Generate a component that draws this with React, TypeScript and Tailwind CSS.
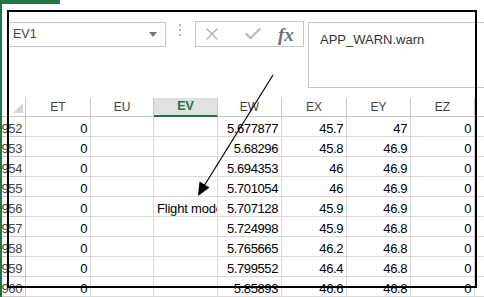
import { X, Check } from "lucide-react";

const font = { fontFamily: '"Liberation Sans", Arial, sans-serif' };

type Row = { n: number; et: string; ev?: string; ew: string; ex: string; ey: string; ez: string };

const rows: Row[] = [
  { n: 952, et: "0", ew: "5.677877", ex: "45.7", ey: "47", ez: "0" },
  { n: 953, et: "0", ew: "5.68296", ex: "45.8", ey: "46.9", ez: "0" },
  { n: 954, et: "0", ew: "5.694353", ex: "46", ey: "46.9", ez: "0" },
  { n: 955, et: "0", ew: "5.701054", ex: "46", ey: "46.9", ez: "0" },
  { n: 956, et: "0", ev: "Flight mode", ew: "5.707128", ex: "45.9", ey: "46.9", ez: "0" },
  { n: 957, et: "0", ew: "5.724998", ex: "45.9", ey: "46.8", ez: "0" },
  { n: 958, et: "0", ew: "5.765665", ex: "46.2", ey: "46.8", ez: "0" },
  { n: 959, et: "0", ew: "5.799552", ex: "46.4", ey: "46.8", ez: "0" },
  { n: 960, et: "0", ew: "5.85893", ex: "46.6", ey: "46.8", ez: "0" },
];

const cols = [
  { name: "ET", w: "w-[65px]" },
  { name: "EU", w: "w-[63px]" },
  { name: "EV", w: "w-[64px]" },
  { name: "EW", w: "w-[64px]" },
  { name: "EX", w: "w-[65px]" },
  { name: "EY", w: "w-[64px]" },
  { name: "EZ", w: "w-[64px]" },
];

const NumCell = ({ w, v }: { w: string; v: string }) => (
  <div
    className={`${w} h-[20px] shrink-0 border-r border-b border-[#d9d9d9] text-right pr-[3px] pt-[4px] leading-[15px] text-[13px] tracking-[-0.4px] text-black overflow-hidden whitespace-nowrap`}
  >
    {v}
  </div>
);

export default function App() {
  return (
    <div className="relative w-[484px] h-[297px] overflow-hidden bg-white" style={font}>
      {/* formula bar */}
      <div className="h-[98px] flex items-start pl-[7px] pt-[21px]">
        <div className="mt-[1px] w-[159px] h-[25px] border border-[#c6c6c6] flex items-center justify-between pl-[5px] pr-[8px]">
          <span className="text-[12.5px] text-[#444]">EV1</span>
          <svg width="8" height="5" viewBox="0 0 8 5">
            <path d="M0 0h8L4 5z" fill="#777" />
          </svg>
        </div>
        <div className="ml-[13px] mt-[3px] flex flex-col gap-[3px]">
          <div className="w-[2px] h-[2px] bg-[#b5b5b5]" />
          <div className="w-[2px] h-[2px] bg-[#b5b5b5]" />
          <div className="w-[2px] h-[2px] bg-[#b5b5b5]" />
        </div>
        <div className="ml-[14px] w-[109px] h-[26px] border border-[#c6c6c6] flex items-center pl-[6px]">
          <X size={20} strokeWidth={1.6} className="text-[#b3b3b3]" />
          <Check size={20} strokeWidth={2.6} className="ml-[21px] text-[#b8b8b8]" />
          <span
            className="ml-[15px] text-[19px] italic font-bold text-[#707070] leading-none"
            style={{ fontFamily: '"Liberation Serif", "Times New Roman", serif' }}
          >
            fx
          </span>
        </div>
        <div className="ml-[4px] mt-[1px] flex-1 h-[66px] border border-[#c6c6c6] border-r-0 pl-[11px] pt-[4px]">
          <span className="text-[13px] text-[#333]">APP_WARN.warn</span>
        </div>
      </div>

      {/* header row */}
      <div className="flex h-[19px]">
        <div className="w-[26px] shrink-0 border-r border-b border-[#c8c8c8] relative">
          <svg className="absolute left-[13px] top-[5px]" width="10" height="10" viewBox="0 0 10 10">
            <path d="M10 0V10H0z" fill="#d6d6d6" />
          </svg>
        </div>
        {cols.map((c) =>
          c.name === "EV" ? (
            <div
              key={c.name}
              className={`${c.w} shrink-0 bg-[#e1e1e1] border-r border-[#c8c8c8] border-b-2 border-b-[#217346] flex items-center justify-center text-[12.5px] font-bold text-[#217346]`}
            >
              EV
            </div>
          ) : (
            <div
              key={c.name}
              className={`${c.w} shrink-0 border-r border-b border-[#c8c8c8] flex items-center justify-center text-[12px] text-[#444]`}
            >
              {c.name}
            </div>
          )
        )}
        <div className="flex-1 border-b border-[#c8c8c8]" />
      </div>

      {/* rows */}
      {rows.map((r) => (
        <div key={r.n} className="flex">
          <div className="w-[26px] h-[20px] shrink-0 border-r border-b border-[#c8c8c8] text-right pr-[3px] pt-[4px] leading-[15px] text-[13px] tracking-[-0.4px] text-[#444]">
            {r.n}
          </div>
          <NumCell w="w-[65px]" v={r.et} />
          <NumCell w="w-[63px]" v="" />
          <div className="w-[64px] h-[20px] shrink-0 border-r border-b border-[#d9d9d9] pl-[3px] pt-[4px] leading-[15px] text-[13px] tracking-[-0.2px] text-black overflow-hidden whitespace-nowrap">
            {r.ev ?? ""}
          </div>
          <NumCell w="w-[64px]" v={r.ew} />
          <NumCell w="w-[65px]" v={r.ex} />
          <NumCell w="w-[64px]" v={r.ey} />
          <NumCell w="w-[64px]" v={r.ez} />
          <div className="flex-1 h-[20px] border-b border-[#d9d9d9]" />
        </div>
      ))}

      {/* excel chrome edges */}
      <div className="absolute left-0 top-0 w-[60px] h-[4px] bg-[#217346]" />
      <div className="absolute left-0 top-0 w-[2px] h-[297px] bg-[#217346]" />

      {/* annotation frame and arrow */}
      <div className="absolute left-[7px] top-[10px] w-[470px] h-[278px] border-2 border-black pointer-events-none" />
      <svg className="absolute left-0 top-0 pointer-events-none" width="484" height="297" viewBox="0 0 484 297">
        <line x1="273" y1="75" x2="204" y2="186" stroke="black" strokeWidth="1.2" />
        <path d="M198 196 L199.5 181.5 L209.5 187.5 Z" fill="black" />
      </svg>
    </div>
  );
}
